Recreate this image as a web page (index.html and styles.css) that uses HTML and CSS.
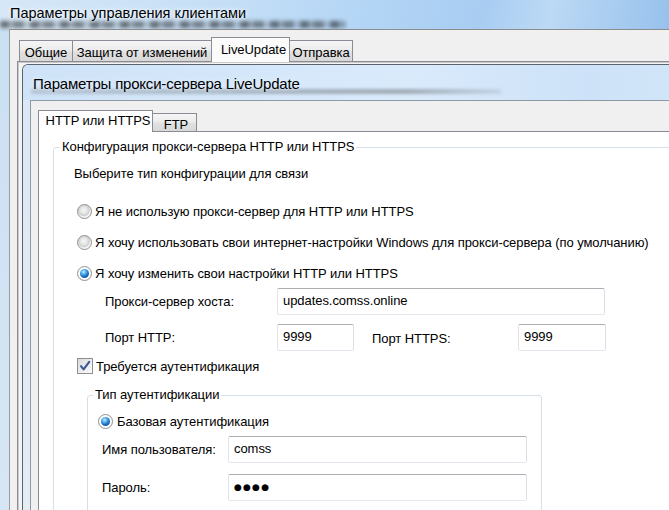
FILE: index.html
```html
<!DOCTYPE html>
<html lang="ru">
<head>
<meta charset="utf-8">
<title>Параметры управления клиентами</title>
<link rel="stylesheet" href="styles.css">
</head>
<body>
<div class="titlebar">
  <span class="title-ghost" aria-hidden="true"></span>
  <span class="title">Параметры управления клиентами</span>
</div>
<div class="dialog">
  <div class="tabs">
    <div class="tab w1">Общие</div>
    <div class="tab w2">Защита от изменений</div>
    <div class="tab on w3">LiveUpdate</div>
    <div class="tab w4">Отправка</div>
  </div>
  <div class="panel">
    <div class="win">
      <div class="win-title">
        <span class="win-ghost" aria-hidden="true"></span>
        <span class="win-caption">Параметры прокси-сервера LiveUpdate</span>
      </div>
      <div class="win-body">
        <div class="subtabs">
          <div class="stab on">HTTP или HTTPS</div>
          <div class="stab ftp">FTP</div>
        </div>
        <div class="subpanel">
          <fieldset class="group">
            <legend>Конфигурация прокси-сервера HTTP или HTTPS</legend>
            <div class="intro">Выберите тип конфигурации для связи</div>
            <div class="radio-row r1"><span class="radio"></span><span>Я не использую прокси-сервер для HTTP или HTTPS</span></div>
            <div class="radio-row r2"><span class="radio"></span><span>Я хочу использовать свои интернет-настройки Windows для прокси-сервера (по умолчанию)</span></div>
            <div class="radio-row r2"><span class="radio checked"><span class="dot"></span></span><span>Я хочу изменить свои настройки HTTP или HTTPS</span></div>
            <div class="field-row host-row">
              <span class="lbl lbl-main">Прокси-сервер хоста:</span>
              <div class="input in-host">updates.comss.online</div>
            </div>
            <div class="field-row port-row">
              <span class="lbl lbl-main">Порт HTTP:</span>
              <div class="input in-port">9999</div>
              <span class="lbl lbl-https">Порт HTTPS:</span>
              <div class="input in-https">9999</div>
            </div>
            <div class="check-row">
              <span class="checkbox"><svg width="14" height="14" viewBox="0 0 14 14"><path d="M3 7.2 L5.6 10.4 L11.2 2.8" fill="none" stroke="#3b5795" stroke-width="2.1" stroke-linecap="round" stroke-linejoin="round"/></svg></span>
              <span>Требуется аутентификация</span>
            </div>
            <fieldset class="group inner">
              <legend>Тип аутентификации</legend>
              <div class="radio-row auth-radio"><span class="radio checked"><span class="dot"></span></span><span>Базовая аутентификация</span></div>
              <div class="field-row auth-row user-row">
                <span class="lbl lbl-auth">Имя пользователя:</span>
                <div class="input in-auth">comss</div>
              </div>
              <div class="field-row auth-row pass-row">
                <span class="lbl lbl-auth">Пароль:</span>
                <div class="input in-auth pass">●●●●</div>
              </div>
            </fieldset>
          </fieldset>
        </div>
      </div>
    </div>
  </div>
</div>
</body>
</html>
```
FILE: styles.css
```css
html, body {
  margin: 0;
  width: 669px;
  height: 510px;
  overflow: hidden;
}
body {
  font-family: "Liberation Sans", Arial, sans-serif;
  font-size: 13px;
  letter-spacing: -0.06px;
  color: #000;
  background: linear-gradient(180deg, #cadff3 0%, #d6e6f4 100%);
}

/* top glass title bar */
.titlebar {
  position: relative;
  height: 29px;
  background: linear-gradient(100deg, #d6e7f7 0%, #c4def6 35%, #b3d5f5 55%, #a8cdf2 72%, #bcd9f5 82%, #97c1ec 100%);
}
.title {
  position: relative;
  display: block;
  padding-left: 10px;
  font-size: 14.5px;
  letter-spacing: 0;
  line-height: 26px;
  color: #000;
  text-shadow: 0 0 6px #f4f9ff, 0 0 3px #f4f9ff;
}
.title-ghost {
  position: absolute;
  left: 0;
  top: 21px;
  width: 345px;
  height: 7px;
  background: repeating-linear-gradient(90deg, rgba(25,25,25,0.6) 0 9px, rgba(25,25,25,0.25) 9px 13px, rgba(25,25,25,0.5) 13px 24px, rgba(25,25,25,0.15) 24px 30px);
  filter: blur(2px);
}

/* outer dialog */
.dialog {
  position: relative;
  margin-left: 9px;
  margin-right: -60px;
  height: 600px;
  border-top: 1px solid #8c8c8c;
  border-left: 1px solid #9c9c9c;
  background: #f0f0f0;
}
.tabs {
  display: flex;
  align-items: flex-end;
  height: 31px;
  padding-left: 9px;
}
.tab {
  box-sizing: border-box;
  height: 21px;
  margin-right: -1px;
  padding-top: 2px;
  line-height: 19px;
  text-align: center;
  white-space: nowrap;
  border: 1px solid #898c95;
  border-bottom: 0;
  background: linear-gradient(180deg, #f5f5f5 0%, #ececec 45%, #e0e0e0 55%, #d8d8d8 100%);
}
.tab.on {
  position: relative;
  z-index: 1;
  height: 25px;
  margin-bottom: -1px;
  padding-top: 2px;
  line-height: 20px;
  background: #fbfbfb;
}
.w1 { width: 54px; }
.w2 { width: 140px; }
.w3 { width: 79px; padding-left: 6px; }
.w4 { width: 64px; }

.panel {
  margin-left: 7px;
  height: 560px;
  padding: 2px 0 0 4px;
  border-top: 1px solid #898c95;
  border-left: 1px solid #898c95;
  background: #f4f4f4;
  box-shadow: inset 1px 1px 0 #c9c9c9;
}

/* nested window */
.win {
  height: 540px;
  border-top: 1px solid #5a636e;
  border-left: 1px solid #5a636e;
  border-top-left-radius: 6px;
  background: linear-gradient(180deg, #dbe8f5 0%, #e6edf4 100%);
}
.win-title {
  position: relative;
  box-sizing: border-box;
  height: 35px;
  padding: 5px 0 0 10px;
  line-height: 28px;
  font-size: 15px;
  letter-spacing: -0.2px;
  border-top-left-radius: 5px;
  background: linear-gradient(90deg, #cfe3f8 0%, #d4e7fa 30%, #d9eafb 55%, #cde2f8 80%, #d5e8fa 100%);
}
.win-caption {
  position: relative;
  color: #000;
  text-shadow: 0 0 5px #eef6ff;
}
.win-ghost {
  position: absolute;
  left: 8px;
  top: 24px;
  width: 470px;
  height: 5px;
  background: linear-gradient(90deg, rgba(60,60,60,0.18), rgba(60,60,60,0.3) 50%, rgba(60,60,60,0.35) 80%, rgba(60,60,60,0.1));
  filter: blur(1.8px);
}
.win-body {
  margin-left: 7px;
  height: 500px;
  padding: 9px 0 0 7px;
  border-top: 1px solid #8f98a3;
  border-left: 1px solid #8f98a3;
  background: #f0f0f0;
}

.subtabs {
  display: flex;
  align-items: flex-end;
  height: 21px;
}
.stab {
  box-sizing: border-box;
  height: 18px;
  padding-top: 2px;
  line-height: 17px;
  text-align: center;
  white-space: nowrap;
  border: 1px solid #898c95;
  border-bottom: 0;
  background: linear-gradient(180deg, #f5f5f5 0%, #ececec 45%, #e0e0e0 55%, #d8d8d8 100%);
}
.stab.on {
  position: relative;
  z-index: 1;
  width: 115px;
  height: 22px;
  margin-bottom: -1px;
  padding: 1px 0 0 5px;
  line-height: 18px;
  background: #fff;
}
.stab.ftp {
  width: 45px;
  margin-left: -1px;
  padding-left: 3px;
}

.subpanel {
  height: 480px;
  padding: 7px 0 0 14px;
  border-top: 1px solid #898c95;
  border-left: 1px solid #898c95;
  background: #fff;
}

/* group boxes */
.group {
  margin: 0;
  padding: 0 0 30px 6px;
  border: 1px solid #d5dfe5;
  border-radius: 3px;
  min-width: 0;
}
.group legend {
  padding: 0 2px;
  line-height: 16px;
}
.intro {
  margin: 11px 0 0 14px;
  line-height: 16px;
}
.radio-row {
  display: flex;
  align-items: center;
  gap: 3px;
  height: 20px;
  margin-left: 17px;
  white-space: nowrap;
}
.r1 { margin-top: 19px; }
.r2 { margin-top: 11px; }

.radio {
  position: relative;
  box-sizing: border-box;
  width: 15px;
  height: 15px;
  flex: none;
  border-radius: 50%;
  border: 1px solid #8d9095;
  background: radial-gradient(circle at 45% 40%, #f7f7f7 0%, #e6e6e6 30%, #cfcfcf 52%, #f4f4f4 62%, #fdfdfd 100%);
}
.radio.checked {
  background: radial-gradient(circle at 50% 50%, #ffffff 60%, #eeeeee 100%);
}
.dot {
  position: absolute;
  left: 2px;
  top: 2px;
  width: 9px;
  height: 9px;
  border-radius: 50%;
  background: radial-gradient(circle at 40% 32%, #c6ecff 0%, #58b2ef 28%, #1a6cc0 58%, #0b3f7a 100%);
}

.field-row {
  display: flex;
  align-items: center;
  margin-left: 45px;
  white-space: nowrap;
}
.host-row { margin-top: 5px; }
.port-row { margin-top: 9px; }
.lbl-main { width: 172px; }
.lbl-https { width: 146px; margin-left: 18px; padding-top: 2px; }

.input {
  box-sizing: border-box;
  height: 27px;
  padding-left: 5px;
  line-height: 24px;
  border: 1px solid;
  border-color: #abadb3 #dbdfe6 #e3e9ef #e2e3ea;
  border-radius: 2px;
  background: #fff;
  white-space: nowrap;
}
.in-host { width: 328px; }
.in-port { width: 77px; }
.in-https { width: 88px; }
.in-auth { width: 299px; }
.pass {
  font-family: "DejaVu Sans", sans-serif;
  font-size: 9px;
  letter-spacing: 1.2px;
  line-height: 25px;
}

.check-row {
  display: flex;
  align-items: center;
  gap: 3px;
  height: 20px;
  margin: 5px 0 0 17px;
  white-space: nowrap;
}
.checkbox {
  box-sizing: border-box;
  display: flex;
  align-items: center;
  justify-content: center;
  width: 16px;
  height: 16px;
  flex: none;
  border: 1px solid #8e8f8f;
  background: linear-gradient(135deg, #d9d9d9 0%, #ececec 50%, #fafafa 100%);
}

.group.inner {
  box-sizing: border-box;
  width: 455px;
  margin: 11px 0 0 27px;
  padding: 0 0 30px 5px;
}
.auth-radio {
  margin: 8px 0 0 5px;
  gap: 4px;
}
.auth-row { margin-left: 9px; }
.user-row { margin-top: 5px; }
.pass-row { margin-top: 11px; }
.lbl-auth { width: 126px; }
```
